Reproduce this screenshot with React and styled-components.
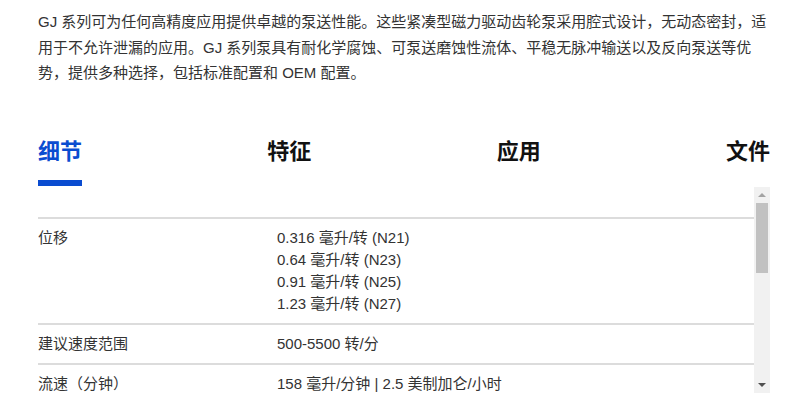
import React, { useState } from 'react'
import styled, { createGlobalStyle } from 'styled-components'

const GlobalStyle = createGlobalStyle`
    html, body {
        margin: 0;
        padding: 0;
        background: #fff;
    }
    body {
        font-family: "Liberation Sans", "Noto Sans CJK SC", sans-serif;
        color: #333;
    }
`
const Page = styled.div`
    width: 732px;
    padding: 9px 0 0 38px;
`
const Intro = styled.p`
    margin: 0;
    font-size: 15px;
    line-height: 25.5px;
    color: #333;
`
const TabBar = styled.ul`
    display: flex;
    justify-content: space-between;
    align-items: flex-start;
    list-style: none;
    margin: 49px 0 0;
    padding: 0;
`
const Tab = styled.li`
    font-size: 22px;
    font-weight: 700;
    line-height: 33px;
    padding-bottom: 12px;
    color: ${(p) => (p.$active ? '#0a4cd0' : '#111')};
    border-bottom: 6px solid ${(p) => (p.$active ? '#0a4cd0' : 'transparent')};
    cursor: pointer;
`
const Panel = styled.div`
    display: flex;
    margin-top: 1px;
    height: 206px;
`
const ScrollBody = styled.div`
    flex: 1;
    overflow-y: auto;
    scrollbar-width: none;
    &::-webkit-scrollbar {
        display: none;
    }
`
const Track = styled.div`
    width: 16px;
    flex: none;
    display: flex;
    flex-direction: column;
    align-items: center;
    background: #f1f1f1;
`
const Arrow = styled.div`
    height: 16px;
    width: 100%;
    display: flex;
    align-items: center;
    justify-content: center;
    &::before {
        content: "";
        border-left: 4px solid transparent;
        border-right: 4px solid transparent;
        ${(p) => (p.$down
            ? 'border-top: 4px solid #505050;'
            : 'border-bottom: 4px solid #a3a3a3;')}
    }
`
const Rail = styled.div`
    flex: 1;
    width: 100%;
    display: flex;
    justify-content: center;
`
const Thumb = styled.div`
    width: 12px;
    height: 70px;
    background: #c1c1c1;
`
const Table = styled.div`
    padding-top: 30px;
    padding-bottom: 20px;
`
const Row = styled.div`
    display: grid;
    grid-template-columns: 239px 1fr;
    border-top: 2px solid #dcdcdc;
    padding: 8px 0;
    font-size: 15px;
    line-height: 22px;
    color: #333;
`
const Label = styled.div``
const Values = styled.div`
    display: flex;
    flex-direction: column;
`

const tabs = ['细节', '特征', '应用', '文件']

const specs = [
    { label: '位移', values: ['0.316 毫升/转 (N21)', '0.64 毫升/转 (N23)', '0.91 毫升/转 (N25)', '1.23 毫升/转 (N27)'] },
    { label: '建议速度范围', values: ['500-5500 转/分'] },
    { label: '流速（分钟）', values: ['158 毫升/分钟 | 2.5 美制加仑/小时'] },
    { label: '流速（最大）', values: ['6.8 升/分钟 | 1.8 美制加仑/分钟'] },
    { label: '最大差压', values: ['5.2 巴 | 75 磅/平方英寸'] },
    { label: '最高系统压力', values: ['21 巴 | 300 磅/平方英寸'] },
    { label: '温度范围', values: ['-46 至 121 °C | -50 至 250 °F'] },
    { label: '最大粘度', values: ['1500 厘泊'] },
    { label: '湿润材料', values: ['316 不锈钢、PTFE、PPS'] },
]

function App() {
    const [active, setActive] = useState(0)
    const [scroll, setScroll] = useState(0)

    // 滚动条滑块位置随内容滚动
    const onScroll = (e) => {
        const el = e.currentTarget
        const max = el.scrollHeight - el.clientHeight
        setScroll(max > 0 ? el.scrollTop / max : 0)
    }

    return (
        <>
            <GlobalStyle />
            <Page>
                <Intro>
                    GJ 系列可为任何高精度应用提供卓越的泵送性能。这些紧凑型磁力驱动齿轮泵采用腔式设计，无动态密封，适用于不允许泄漏的应用。GJ 系列泵具有耐化学腐蚀、可泵送磨蚀性流体、平稳无脉冲输送以及反向泵送等优势，提供多种选择，包括标准配置和 OEM 配置。
                </Intro>
                <TabBar>
                    {tabs.map((t, i) => (
                        <Tab key={t} $active={i === active} onClick={() => setActive(i)}>{t}</Tab>
                    ))}
                </TabBar>
                <Panel>
                    <ScrollBody onScroll={onScroll}>
                        <Table>
                            {specs.map((s) => (
                                <Row key={s.label}>
                                    <Label>{s.label}</Label>
                                    <Values>
                                        {s.values.map((v) => <span key={v}>{v}</span>)}
                                    </Values>
                                </Row>
                            ))}
                        </Table>
                    </ScrollBody>
                    <Track>
                        <Arrow />
                        <Rail>
                            <Thumb style={{ marginTop: `${scroll * 104}px` }} />
                        </Rail>
                        <Arrow $down />
                    </Track>
                </Panel>
            </Page>
        </>
    )
}

export default App
